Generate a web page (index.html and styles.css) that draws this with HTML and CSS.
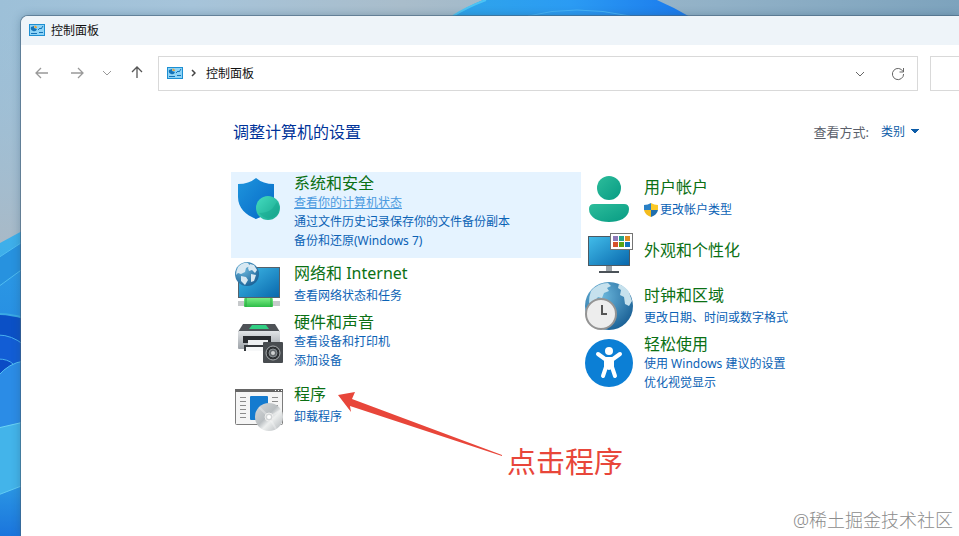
FILE: index.html
```
<!DOCTYPE html>
<html lang="zh-CN">
<head>
    <meta charset="UTF-8">
    <meta name="viewport" content="width=device-width, initial-scale=1.0">
    <title>控制面板</title>
    <link rel="stylesheet" href="styles.css">
</head>
<body>
    <!-- 桌面壁纸 -->
    <svg class="wallpaper" viewBox="0 0 959 536" preserveAspectRatio="xMinYMin slice" aria-hidden="true">
        <defs>
            <linearGradient id="sky" x1="0" y1="0" x2="1" y2="0">
                <stop offset="0" stop-color="#9dc0d8"/>
                <stop offset=".2" stop-color="#a6c4da"/>
                <stop offset=".42" stop-color="#a9bdcb"/>
                <stop offset=".75" stop-color="#91b1c7"/>
                <stop offset="1" stop-color="#7da3bd"/>
            </linearGradient>
            <linearGradient id="haze" x1="0" y1="0" x2="0" y2="1">
                <stop offset="0" stop-color="#9dc0d8" stop-opacity="0"/>
                <stop offset="1" stop-color="#a9b9c6"/>
            </linearGradient>
            <linearGradient id="bloom" x1="0" y1="0" x2="1" y2="0">
                <stop offset="0" stop-color="#2fa5ea"/>
                <stop offset=".5" stop-color="#2b9bf3"/>
                <stop offset="1" stop-color="#1a78ec"/>
            </linearGradient>
            <linearGradient id="petal" x1="0" y1="0" x2="0" y2="1">
                <stop offset="0" stop-color="#2b97e4"/>
                <stop offset="1" stop-color="#1972dc"/>
            </linearGradient>
            <linearGradient id="petalLight" x1="0" y1="0" x2="0" y2="1">
                <stop offset="0" stop-color="#3fb0ea"/>
                <stop offset="1" stop-color="#2b9be6"/>
            </linearGradient>
        </defs>
        <rect width="959" height="536" fill="url(#sky)"/>
        <rect width="24" height="250" fill="url(#haze)"/>
        <path d="M450 18Q467 6 488 -2H652Q672 6 692 18z" fill="url(#bloom)"/>
        <path d="M453 16Q467 7 486 0" fill="none" stroke="#4cc4f4" stroke-width="2"/>
        <path d="M528 16Q575 4 630 16" fill="none" stroke="#47b4f8"/>
        <path d="M-2 244L24 230V540H-2z" fill="url(#petalLight)"/>
        <path d="M-2 258L24 241V540H-2z" fill="#2792df" stroke="#50bdf0"/>
        <path d="M-2 287L24 268V540H-2z" fill="url(#petal)" stroke="#50bdf0"/>
        <path d="M-2 314Q10 314 24 318V540H-2z" fill="#0b50c6" stroke="#3aa9e4" stroke-width="2"/>
        <path d="M-2 335Q12 335 24 345V540H-2z" fill="#125dd5" stroke="#48b0f0"/>
        <path d="M-2 359Q8 359 13 364V380H-2z" fill="#0a4bc5" stroke="#48b0f0"/>
        <path d="M-2 376Q9 363 24 361V540H-2z" fill="#2b8ce6" stroke="#55c0f4"/>
        <path d="M-2 428L24 422V540H-2z" fill="#43b4ea" stroke="#6cd4f4"/>
        <path d="M-2 495L24 485V540H-2z" fill="url(#petal)" stroke="#62cbf3"/>
    </svg>

    <!-- 图标 -->
    <svg class="symbols" aria-hidden="true">
        <symbol id="icon-panel" viewBox="0 0 16 12">
            <rect x=".5" y=".5" width="15" height="11" fill="#8dd3f6" stroke="#1d8fd2"/>
            <path d="M2 3a3 3 0 0 0 6 2L5 4V2z" fill="#1473b8"/>
            <path d="M5.500 1.500V4H8a2.500 2.500 0 0 0-2.500-2.500z" fill="#e8a33d"/>
            <path d="M9 6l2-2 1 1 2-3M2 9.500h6M10 8.500h4" fill="none" stroke="#1473b8"/>
        </symbol>
        <symbol id="icon-down" viewBox="0 0 10 6">
            <path d="M1 1l4 4 4-4" fill="none" stroke="currentColor"/>
        </symbol>
    </svg>

    <div class="window">
        <div class="titlebar">
            <svg class="icon-small"><use href="#icon-panel"/></svg>
            <span>控制面板</span>
        </div>

        <div class="toolbar">
            <div class="nav">
                <button class="nav-btn" aria-label="后退">
                    <svg width="14" height="12" viewBox="0 0 14 12"><path d="M13 6H1M6 1L1 6l5 5" fill="none" stroke="currentColor" stroke-width="1.300"/></svg>
                </button>
                <button class="nav-btn" aria-label="前进">
                    <svg width="14" height="12" viewBox="0 0 14 12"><path d="M1 6h12M8 1l5 5-5 5" fill="none" stroke="currentColor" stroke-width="1.300"/></svg>
                </button>
                <button class="nav-btn nav-history" aria-label="最近位置">
                    <svg width="10" height="6"><use href="#icon-down"/></svg>
                </button>
                <button class="nav-btn nav-up" aria-label="上移">
                    <svg width="12" height="13" viewBox="0 0 12 13"><path d="M6 12V1M1 6l5-5 5 5" fill="none" stroke="currentColor" stroke-width="1.300"/></svg>
                </button>
            </div>
            <div class="address">
                <svg class="icon-small"><use href="#icon-panel"/></svg>
                <svg class="crumb-arrow" width="5" height="8" viewBox="0 0 5 8"><path d="M1 1l3 3-3 3" fill="none" stroke="#444" stroke-width="1.500"/></svg>
                <a class="crumb" href="#">控制面板</a>
                <button class="address-btn" aria-label="历史记录">
                    <svg width="10" height="6"><use href="#icon-down"/></svg>
                </button>
                <button class="address-btn" aria-label="刷新">
                    <svg width="14" height="14" viewBox="0 0 14 14"><path d="M12 4.500A5.600 5.600 0 1 0 12.600 7M12.500 1v4H8.500" fill="none" stroke="currentColor"/></svg>
                </button>
            </div>
            <input class="search" type="text" aria-label="搜索控制面板">
        </div>

        <div class="content">
            <div class="content-head">
                <h1>调整计算机的设置</h1>
                <div class="view">
                    <label for="view-mode">查看方式:</label>
                    <select id="view-mode">
                        <option>类别</option>
                    </select>
                </div>
            </div>

            <div class="categories">
                <div class="column">
                    <div class="item selected">
                        <svg class="item-icon" viewBox="0 -2 48 48">
                            <defs>
                                <linearGradient id="shield" x1="0" y1="0" x2="1" y2="1"><stop offset="0" stop-color="#1e95dd"/><stop offset="1" stop-color="#0668c6"/></linearGradient>
                                <linearGradient id="ball" x1="0" y1="0" x2="1" y2="1"><stop offset="0" stop-color="#45dcc0"/><stop offset="1" stop-color="#15a58c"/></linearGradient>
                            </defs>
                            <path d="M3 9Q14 9 21 3q7 6 18 6v14c0 11-8 17-18 21C11 40 3 33 3 22z" fill="url(#shield)"/>
                            <circle cx="33" cy="33" r="12" fill="url(#ball)"/>
                            <path d="M24 38q8 0 13-4l5-7q5 8-2 14-8 6-16-3z" fill="#0e9d86" opacity=".35"/>
                        </svg>
                        <div class="item-text">
                            <h2><a href="#">系统和安全</a></h2>
                            <a class="link hovered" href="#">查看你的计算机状态</a>
                            <a class="link" href="#">通过文件历史记录保存你的文件备份副本</a>
                            <a class="link" href="#">备份和还原(Windows 7)</a>
                        </div>
                    </div>

                    <div class="item single">
                        <svg class="item-icon" viewBox="0 0 48 48">
                            <defs>
                                <linearGradient id="screen" x1="0" y1="0" x2="1" y2="1"><stop offset="0" stop-color="#42bdea"/><stop offset="1" stop-color="#0867ac"/></linearGradient>
                                <radialGradient id="globe" cx=".35" cy=".3" r=".8"><stop offset="0" stop-color="#6cb8dd"/><stop offset="1" stop-color="#165c92"/></radialGradient>
                                <linearGradient id="cable" x1="0" y1="0" x2="0" y2="1"><stop offset="0" stop-color="#7cee85"/><stop offset="1" stop-color="#2dbd48"/></linearGradient>
                            </defs>
                            <rect x="3.500" y="7.500" width="41" height="30" fill="url(#screen)" stroke="#55616b"/>
                            <path d="M23 38h3v4h-3z" fill="#a5abb0"/>
                            <rect x="3" y="41" width="42" height="5" fill="#c6c9cb"/>
                            <rect x="9" y="38" width="29" height="9" rx="1" fill="url(#cable)"/>
                            <path d="M11 38v9M36 38v9" stroke="#2ca943"/>
                            <circle cx="12" cy="14" r="12" fill="url(#globe)"/>
                            <path d="M3 7q5-5 10-4l2 3-4 2-1 4-4 2-3-1-2 2q0-4 2-8zM15 4l4 1 3 5-2 3-3-3-3 1-1-3zM6 16l5 1 2 3-3 5-4-4zM16 14l5 1-2 6-3 1z" fill="#d7e8f2"/>
                        </svg>
                        <div class="item-text">
                            <h2><a href="#">网络和 Internet</a></h2>
                            <a class="link" href="#">查看网络状态和任务</a>
                        </div>
                    </div>

                    <div class="item">
                        <svg class="item-icon" viewBox="0 -3 48 48">
                            <defs>
                                <linearGradient id="printer" x1="0" y1="0" x2="0" y2="1"><stop offset="0" stop-color="#e1e4e7"/><stop offset="1" stop-color="#9da2a8"/></linearGradient>
                            </defs>
                            <path d="M8 4h32l5 8H3z" fill="#4e5257"/>
                            <path d="M17 5h14l3 4H14z" fill="#31cf83"/>
                            <rect x="3" y="11" width="42" height="18" rx="1" fill="url(#printer)"/>
                            <rect x="8" y="16" width="28" height="7" fill="#292c30"/>
                            <path d="M13 20h20v5H13z" fill="#eef0f2"/>
                            <path d="M9 25h24v6H9z" fill="#34383c"/>
                            <path d="M11 27h19v4H11z" fill="#f7f8f9"/>
                            <rect x="28" y="22" width="20" height="21" rx="1" fill="#484c50"/>
                            <circle cx="38" cy="33" r="7" fill="#2d3033" stroke="#a7abad"/>
                            <circle cx="38" cy="33" r="4" fill="#61666a" stroke="#888e92"/>
                            <circle cx="38" cy="33" r="2" fill="#d0d2d3"/>
                        </svg>
                        <div class="item-text">
                            <h2><a href="#">硬件和声音</a></h2>
                            <a class="link" href="#">查看设备和打印机</a>
                            <a class="link" href="#">添加设备</a>
                        </div>
                    </div>

                    <div class="item single programs">
                        <svg class="item-icon" viewBox="0 -3 48 48">
                            <defs>
                                <linearGradient id="disc" x1="0" y1="0" x2="1" y2="1"><stop offset="0" stop-color="#d9dbdc"/><stop offset=".45" stop-color="#b9bec1"/><stop offset=".6" stop-color="#edefef"/><stop offset="1" stop-color="#aeb3b6"/></linearGradient>
                            </defs>
                            <rect x=".5" y="2.500" width="47" height="35" rx="1" fill="#f5f5f5" stroke="#7c7c7c"/>
                            <path d="M0 2h48v3H0z" fill="#666"/>
                            <path d="M40 3.500h1M43 3.500h1M46 3.500h1" stroke="#fff"/>
                            <path d="M5 10.500h6M5 14.500h6M5 18.500h6M5 22.500h6M5 26.500h6M5 30.500h6M37 10.500h6M37 14.500h6M37 18.500h6" stroke="#8c8c8c"/>
                            <rect x="15" y="9" width="18" height="24" rx="1" fill="#147bcf"/>
                            <circle cx="34" cy="30" r="14" fill="url(#disc)"/>
                            <path d="M34 30L24 20M34 30l7 12M34 30l12-7" stroke="#fff" stroke-width="2" opacity=".3"/>
                            <circle cx="34" cy="30" r="4" fill="#d2d5d6" stroke="#eee"/>
                            <circle cx="34" cy="30" r="2" fill="#fff"/>
                        </svg>
                        <div class="item-text">
                            <h2><a href="#">程序</a></h2>
                            <a class="link" href="#">卸载程序</a>
                        </div>
                    </div>
                </div>

                <div class="column">
                    <div class="item single">
                        <svg class="item-icon" viewBox="0 0 48 48">
                            <defs>
                                <linearGradient id="person" x1="0" y1="0" x2="1" y2="1"><stop offset="0" stop-color="#2dbd9b"/><stop offset="1" stop-color="#079b83"/></linearGradient>
                            </defs>
                            <circle cx="24" cy="14" r="12" fill="url(#person)"/>
                            <path d="M9 30h30q5 0 5 5c0 9-10 13-20 13S4 44 4 35q0-5 5-5z" fill="url(#person)"/>
                        </svg>
                        <div class="item-text">
                            <h2><a href="#">用户帐户</a></h2>
                            <a class="link with-shield" href="#">
                                <svg width="14" height="14" viewBox="0 0 14 14">
                                    <path d="M7 0Q4 2 0 2v5h7z" fill="#2a80c5"/>
                                    <path d="M7 0q3 2 7 2v5H7z" fill="#fbc927"/>
                                    <path d="M0 7q1 5 7 7V7z" fill="#f4bc1e"/>
                                    <path d="M14 7q-1 5-7 7V7z" fill="#206fae"/>
                                </svg>
                                更改帐户类型
                            </a>
                        </div>
                    </div>

                    <div class="item single">
                        <svg class="item-icon" viewBox="0 0 48 48">
                            <rect x="3.500" y="10.500" width="41" height="29" fill="url(#screen)" stroke="#4c5962"/>
                            <path d="M21 40h6v5h-6z" fill="#9da5aa"/>
                            <path d="M14 45h20v2H14z" fill="#4b5258"/>
                            <rect x="25.500" y="7.500" width="22" height="16" fill="#fff" stroke="#747474"/>
                            <path d="M28 10h5v5h-5z" fill="#8c78b8"/><path d="M34 10h5v5h-5z" fill="#21a38b"/><path d="M40 10h5v5h-5z" fill="#dc8b22"/>
                            <path d="M28 16h5v5h-5z" fill="#d6512b"/><path d="M34 16h5v5h-5z" fill="#5aa514"/><path d="M40 16h5v5h-5z" fill="#1474bd"/>
                        </svg>
                        <div class="item-text">
                            <h2><a href="#">外观和个性化</a></h2>
                        </div>
                    </div>

                    <div class="item single clock">
                        <svg class="item-icon" viewBox="0 0 48 48">
                            <circle cx="24" cy="24" r="24" fill="url(#globe)"/>
                            <path d="M6 9q7-8 17-8l3 3-4 2 2 3-5 2-2 5-4-1-3 4-6 2q0-7 2-12zM34 2q7 3 10 8l3 9-3 5-4-2-1-7-4-2 1-5-3-2z" fill="#c6e1ed"/>
                            <circle cx="16" cy="32" r="15" fill="#ededed" stroke="#949494" stroke-width="2"/>
                            <path d="M17 23v9h5" fill="none" stroke="#555" stroke-width="2"/>
                        </svg>
                        <div class="item-text">
                            <h2><a href="#">时钟和区域</a></h2>
                            <a class="link" href="#">更改日期、时间或数字格式</a>
                        </div>
                    </div>

                    <div class="item">
                        <svg class="item-icon" viewBox="0 0 48 48">
                            <circle cx="24" cy="24" r="24" fill="#0c7fd5"/>
                            <circle cx="24" cy="12" r="4" fill="#fff"/>
                            <path d="M13 15l7 5h8l7-5M24 20v9M21 28l-3 9M27 28l3 9" fill="none" stroke="#fff" stroke-width="4" stroke-linecap="round" stroke-linejoin="round"/>
                            <path d="M19 19h10v11H19z" fill="#fff"/>
                        </svg>
                        <div class="item-text">
                            <h2><a href="#">轻松使用</a></h2>
                            <a class="link" href="#">使用 Windows 建议的设置</a>
                            <a class="link" href="#">优化视觉显示</a>
                        </div>
                    </div>
                </div>
            </div>
        </div>
    </div>

    <!-- 标注 -->
    <svg class="arrow" width="166" height="66" viewBox="0 0 166 66" aria-hidden="true">
        <path d="M1 3L18 0l-3 7L165 63v1L13 14l1 6z" fill="#e8463a"/>
    </svg>
    <p class="note">点击程序</p>
    <p class="watermark">@稀土掘金技术社区</p>
</body>
</html>
```
FILE: styles.css
```
* {
    box-sizing: border-box;
}
body {
    font-family: "Noto Sans", "Noto Sans CJK SC", sans-serif;
    font-size: 12px;
    margin: 0;
    min-height: 100vh;
    padding: 16px 0 0 21px;
    display: flex;
    position: relative;
    overflow: hidden;
    color: #111;
}
h1, h2, p {
    margin: 0;
    font-weight: 400;
}
a {
    text-decoration: none;
}
button {
    padding: 0;
    border: none;
    background: none;
    cursor: pointer;
}
.wallpaper {
    position: absolute;
    top: 0;
    left: 0;
    width: 100%;
    height: 100%;
    z-index: -1;
}
.symbols {
    position: absolute;
    width: 0;
    height: 0;
}

/* 窗口 */
.window {
    flex: 1;
    min-width: 0;
    background-color: #fff;
    border-top-left-radius: 7px;
    box-shadow: 0 0 0 1px rgba(70, 100, 125, 0.6), 0 0 10px rgba(40, 80, 110, 0.4);
    overflow: hidden;
}
.titlebar {
    display: flex;
    align-items: center;
    gap: 6px;
    height: 29px;
    padding: 0 0 2px 8px;
    background-color: #eef4f9;
}
.icon-small {
    width: 16px;
    height: 12px;
}
.toolbar {
    display: flex;
    align-items: center;
    padding: 11px 0 9px 14px;
}
.nav {
    display: flex;
    align-items: center;
    width: 123px;
    padding-bottom: 2px;
}
.nav-btn {
    display: flex;
    justify-content: center;
    width: 14px;
    margin-right: 21px;
    color: #999;
}
.nav-history {
    width: 10px;
    margin-right: 18px;
    margin-left: -3px;
}
.nav-up {
    margin-right: 0;
    color: #555;
}
.address {
    flex: 1;
    display: flex;
    align-items: center;
    height: 35px;
    padding: 0 12px 2px 8px;
    border: 1px solid #d9d9d9;
}
.crumb-arrow {
    margin: 0 10px 0 8px;
}
.crumb {
    flex: 1;
    color: #111;
}
.address-btn {
    display: flex;
    align-items: center;
    margin-left: 26px;
    padding-top: 3px;
    color: #666;
}
.search {
    width: 29px;
    height: 35px;
    margin-left: 12px;
    border: 1px solid #d9d9d9;
    border-right: none;
    border-radius: 0;
}

/* 内容 */
.content {
    padding: 20px 39px 0 210px;
}
.content-head {
    display: flex;
    justify-content: space-between;
    align-items: center;
    height: 24px;
    padding-left: 2px;
    margin-bottom: 28px;
}
h1 {
    font-size: 16px;
    line-height: 24px;
    color: #003399;
}
.view {
    display: flex;
    align-items: center;
    gap: 12px;
    padding-bottom: 2px;
    font-size: 13px;
    color: #5b5f6b;
}
#view-mode {
    appearance: none;
    width: 39px;
    padding: 0;
    border: none;
    font-family: inherit;
    font-size: 12px;
    color: #0d5ca8;
    background: conic-gradient(from -45deg at 50% 100%, #0d5ca8 90deg, transparent 0) 30px 50% / 8px 4px no-repeat;
}
.categories {
    display: grid;
    grid-template-columns: repeat(2, minmax(0, 350px));
    margin-right: -20px;
}
.item {
    display: flex;
    align-items: center;
    gap: 11px;
    padding: 2px 4px;
}
.item-icon {
    flex: none;
    width: 48px;
    height: 48px;
}
.item-text {
    display: flex;
    flex-direction: column;
    align-items: flex-start;
    white-space: nowrap;
}
.single .item-text {
    gap: 3px;
}
.selected {
    align-items: flex-start;
    padding: 1px 4px 8px;
    background-color: #e5f3ff;
}
.programs {
    align-items: flex-start;
    padding-top: 12px;
}
.clock {
    padding-top: 6px;
}
h2 {
    font-size: 16px;
    line-height: 20px;
}
h2 a {
    color: #0b7014;
}
.link {
    line-height: 19px;
    color: #0b62b5;
}
.hovered {
    color: #4a9ae0;
    text-decoration: underline;
}
.with-shield {
    display: flex;
    align-items: center;
    gap: 2px;
}

/* 标注 */
.arrow {
    position: absolute;
    left: 337px;
    top: 392px;
}
.note {
    position: absolute;
    left: 507px;
    top: 442px;
    font-size: 29px;
    line-height: 40px;
    color: #e8463a;
}
.watermark {
    position: absolute;
    right: 6px;
    bottom: 4px;
    font-size: 18px;
    font-weight: 300;
    line-height: 24px;
    color: #8c8c8c;
}
```
